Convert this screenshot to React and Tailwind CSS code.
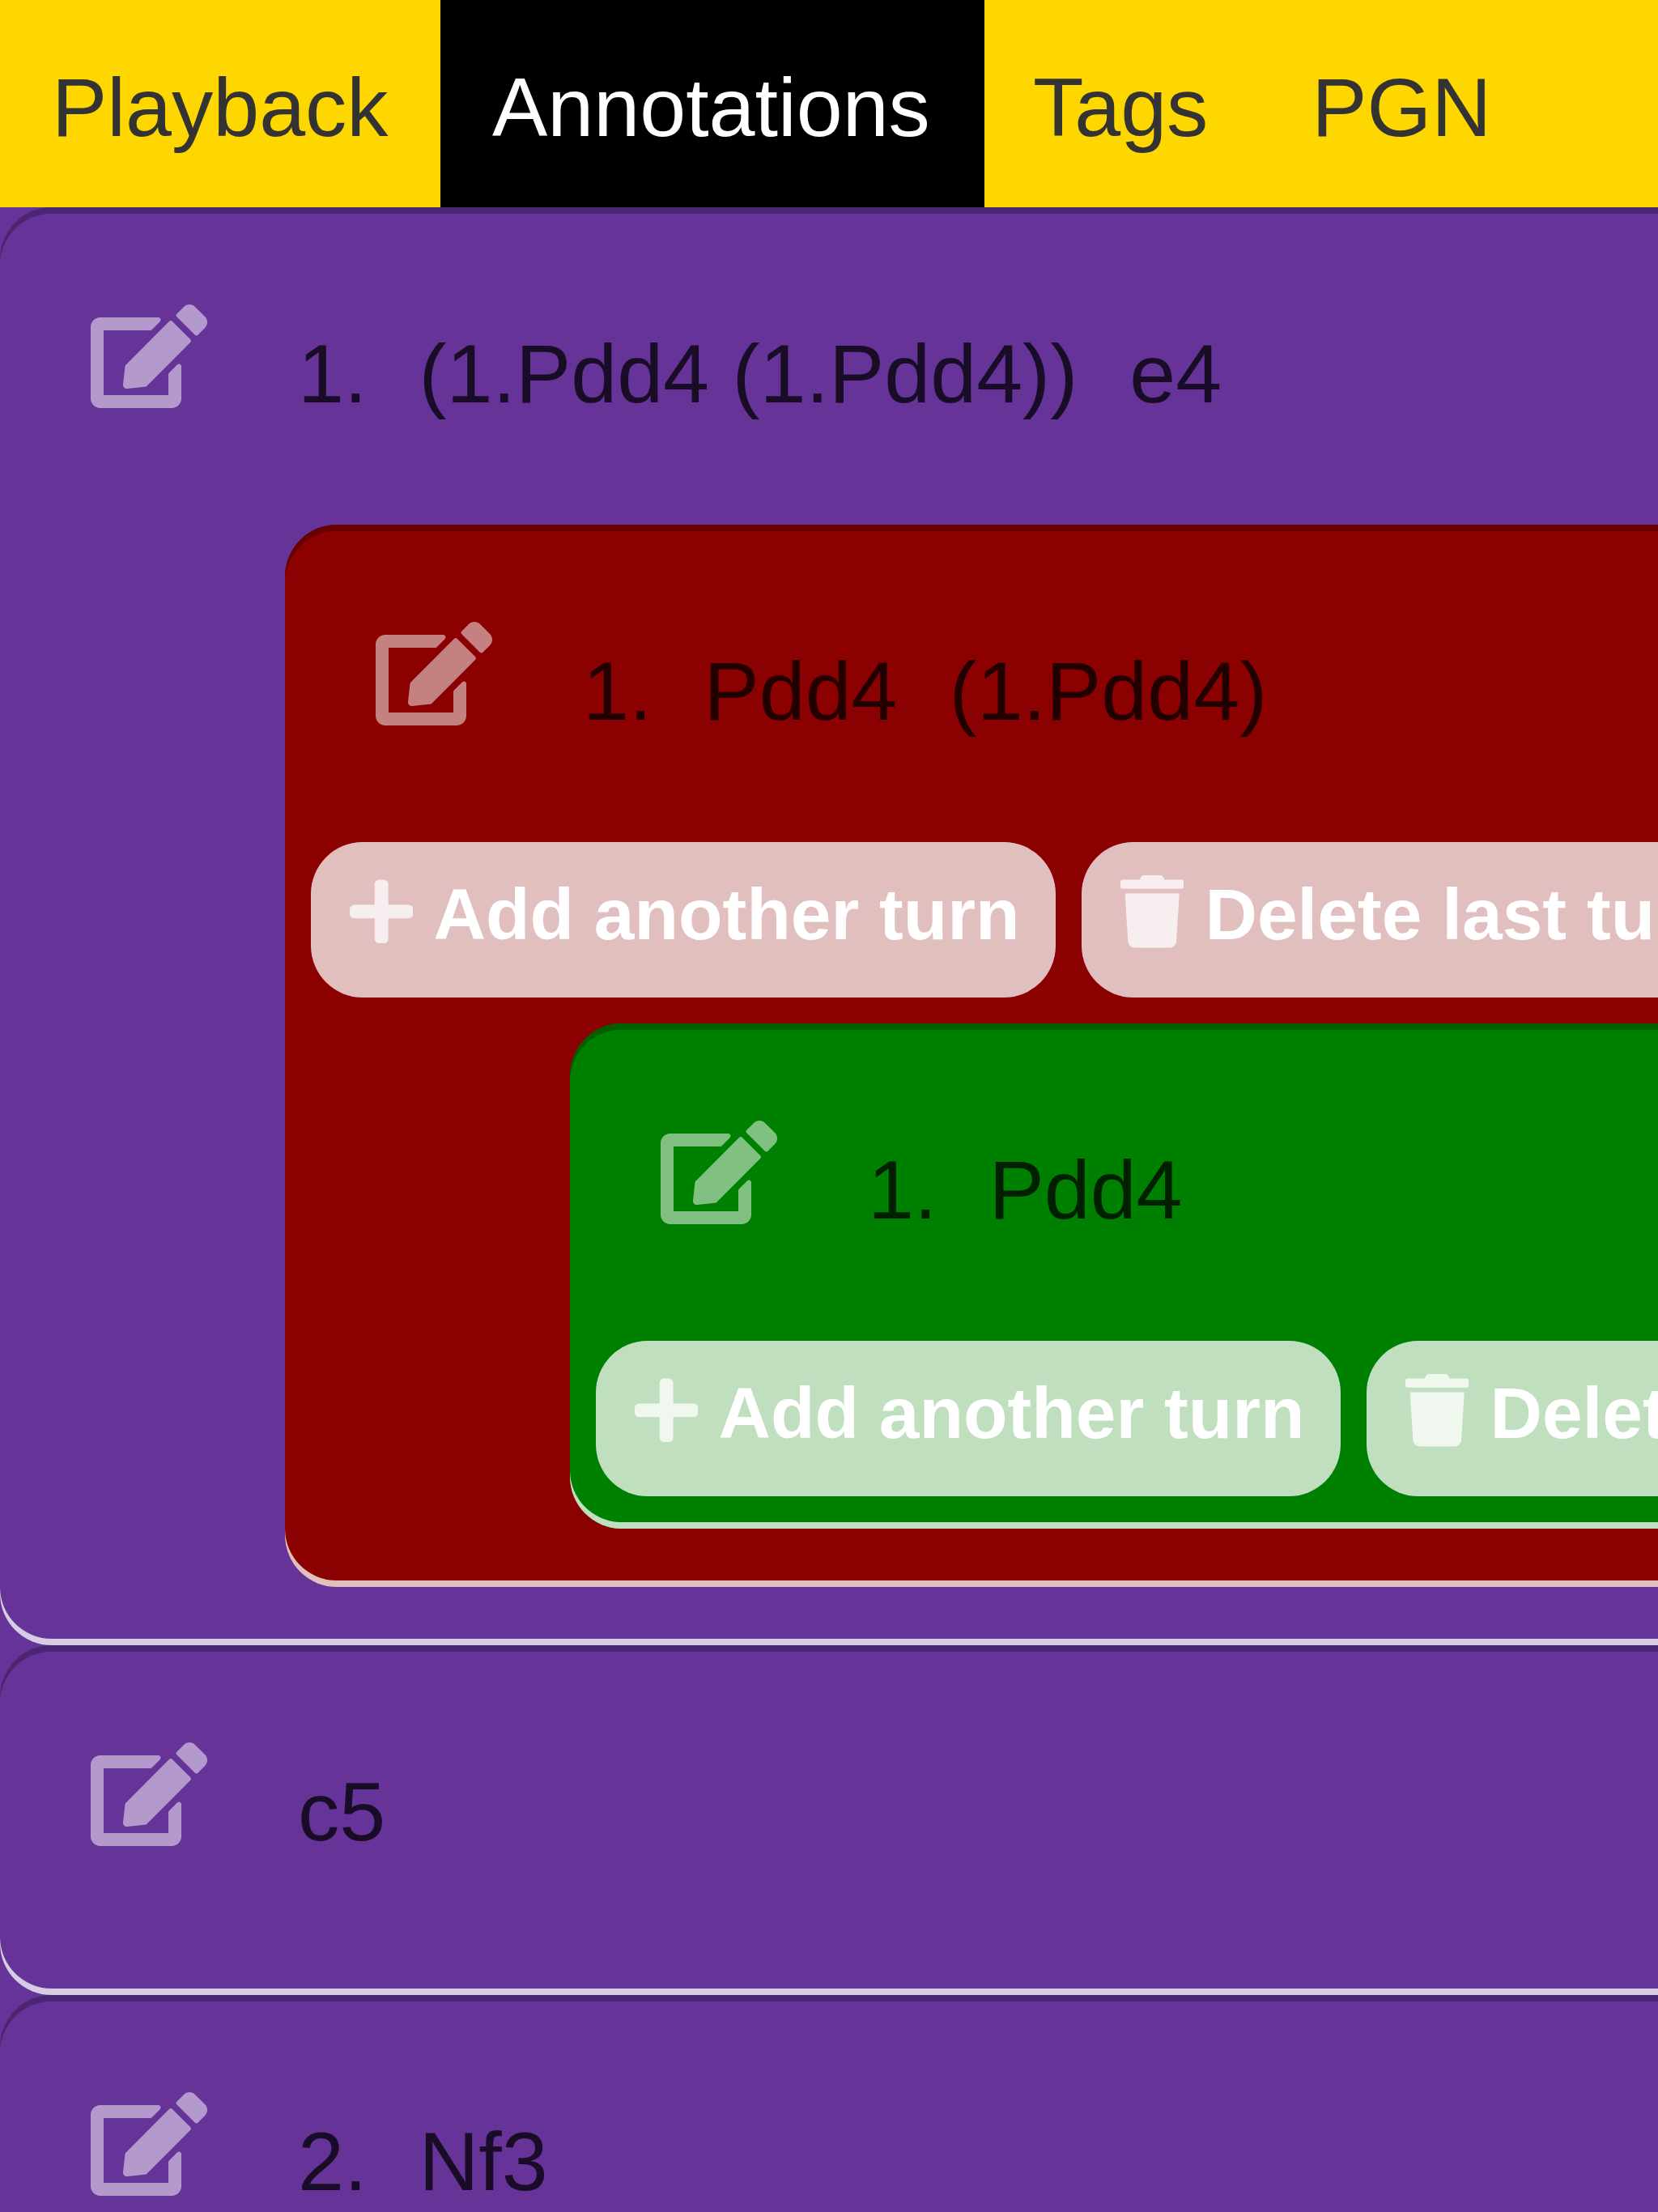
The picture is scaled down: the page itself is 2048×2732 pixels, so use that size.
import React from "react";
import { FaEdit, FaPlus, FaTrash } from "react-icons/fa";

function Buttons({ last }) {
  return (
    <div className={last ? "flex gap-[32px] pl-[32px] whitespace-nowrap" : "flex gap-[32px] pl-[32px] mb-[32px] whitespace-nowrap"}>
      <div className="shrink-0 h-[192px] w-[920px] pl-[48px] rounded-[64px] bg-white/75 flex items-start pt-[41px] text-white font-bold text-[89.3px] leading-[100px]">
        <FaPlus className="shrink-0 w-[78.4px] h-[89.6px] opacity-75" />
        <span className="ml-[25px] -mt-[2px]">Add another turn</span>
      </div>
      <div className="shrink-0 h-[192px] pl-[48px] pr-[43px] rounded-[64px] bg-white/75 flex items-start pt-[41px] text-white font-bold text-[89.3px] leading-[100px]">
        <FaTrash className="shrink-0 w-[78.4px] h-[89.6px] opacity-75" />
        <span className="ml-[26px] -mt-[2px]">Delete last turn</span>
      </div>
    </div>
  );
}

function Row({ parts }) {
  return (
    <div className="h-[392px] pl-[112px] pt-[120px] flex items-start">
      <FaEdit className="shrink-0 w-[144px] h-[128px] text-white/50" />
      <div className="ml-[112px] flex gap-[64px] text-black/75 whitespace-nowrap leading-[118px] mt-[27px]">
        {parts.map((p) => (
          <span key={p}>{p}</span>
        ))}
      </div>
    </div>
  );
}

const cardShadow = "shadow-[inset_0_8px_0_rgba(0,0,0,0.25),inset_0_-8px_0_rgba(255,255,255,0.75)]";

export default function App() {
  return (
    <div className="w-[2048px] h-[2732px] overflow-hidden bg-[#663399] text-[102.4px] font-['Liberation_Sans',Arial,sans-serif]">
      <div className="flex h-[256px] bg-[#ffd700] text-[#333333]">
        <div className="w-[544px] h-[256px] pl-[64px] pt-[10px] flex items-center">Playback</div>
        <div className="w-[672px] h-[256px] pl-[64px] pt-[10px] flex items-center bg-black text-white">Annotations</div>
        <div className="h-[256px] pl-[60px] pr-[64px] pt-[10px] flex items-center">Tags</div>
        <div className="h-[256px] px-[64px] pt-[10px] flex items-center">PGN</div>
      </div>

      <div className={"w-[2400px] pb-[40px] rounded-[64px] bg-[#663399] " + cardShadow}>
        <Row parts={["1.", "(1.Pdd4 (1.Pdd4))", "e4"]} />
        <div className={"ml-[352px] mb-[32px] w-[2048px] pb-[40px] rounded-[64px] bg-[#8b0000] " + cardShadow}>
          <Row parts={["1.", "Pdd4", "(1.Pdd4)"]} />
          <Buttons />
          <div className={"ml-[352px] mb-[32px] w-[1696px] pb-[40px] rounded-[64px] bg-[#008000] " + cardShadow}>
            <Row parts={["1.", "Pdd4"]} />
            <Buttons last />
          </div>
        </div>
      </div>

      <div className={"w-[2400px] pb-[40px] rounded-[64px] bg-[#663399] " + cardShadow}>
        <Row parts={["c5"]} />
      </div>

      <div className={"w-[2400px] pb-[40px] rounded-[64px] bg-[#663399] " + cardShadow}>
        <Row parts={["2.", "Nf3"]} />
      </div>
    </div>
  );
}
